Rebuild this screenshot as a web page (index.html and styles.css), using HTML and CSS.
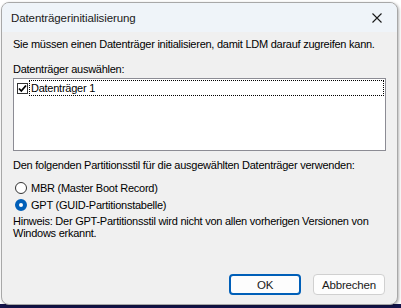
FILE: index.html
```html
<!DOCTYPE html>
<html lang="de">
  <head>
    <meta charset="UTF-8" />
    <meta name="viewport" content="width=device-width, initial-scale=1.0" />
    <title>Datenträgerinitialisierung</title>
    <link rel="stylesheet" href="styles.css">
  </head>

  <body>
    <div class="dialog">
      <div class="titlebar">
        <span class="title">Datenträgerinitialisierung</span>
        <svg class="close" width="10" height="10" viewBox="0 0 10 10">
          <path d="M0.5 0.5 L9.5 9.5 M9.5 0.5 L0.5 9.5" stroke="#1a1a1a" stroke-width="1.1" fill="none" />
        </svg>
      </div>

      <div class="content">
        <p class="intro">Sie müssen einen Datenträger initialisieren, damit LDM darauf zugreifen kann.</p>

        <p class="label">Datenträger auswählen:</p>
        <div class="listbox">
          <div class="item">
            <span class="check">
              <svg width="9" height="9" viewBox="0 0 9 9">
                <path d="M1 4.5 L3.3 7 L8 1.5" stroke="#000" stroke-width="1.8" fill="none" />
              </svg>
            </span>
            <span class="item-text">Datenträger 1</span>
          </div>
        </div>

        <p class="label style-label">Den folgenden Partitionsstil für die ausgewählten Datenträger verwenden:</p>
        <div class="radio-row first">
          <span class="radio"></span>
          <span>MBR (Master Boot Record)</span>
        </div>
        <div class="radio-row">
          <span class="radio checked"></span>
          <span>GPT (GUID-Partitionstabelle)</span>
        </div>
        <p class="hint">Hinweis: Der GPT-Partitionsstil wird nicht von allen vorherigen Versionen von<br>Windows erkannt.</p>

        <div class="buttons">
          <button class="btn default">OK</button>
          <button class="btn">Abbrechen</button>
        </div>
      </div>
    </div>
  </body>
</html>
```

FILE: styles.css
```css
body {
  margin: 0;
  height: 308px;
  overflow: hidden;
  background: linear-gradient(#ffffff 0, #ffffff 304px, #14144a 304px);
  font-family: "Liberation Sans", Arial, sans-serif;
  font-size: 11px;
  letter-spacing: -0.25px;
  color: #000;
}

p {
  margin: 0;
  white-space: nowrap;
}

.dialog {
  margin: 2px 0 0 1px;
  width: 395px;
  height: 301px;
  border: 1px solid #a8a8a8;
  border-radius: 8px;
  background: #f0f0f0;
  overflow: hidden;
  display: flex;
  flex-direction: column;
  box-shadow: 1px 1px 3px rgba(0, 0, 0, 0.3);
}

.titlebar {
  height: 29px;
  background: #eff4f9;
  display: flex;
  align-items: center;
  justify-content: space-between;
  padding: 0 15px 0 9px;
}

.title {
  font-size: 11.5px;
  letter-spacing: -0.1px;
  color: #1a1a1a;
}

.content {
  flex: 1;
  padding: 5px 11px 0 11px;
  display: flex;
  flex-direction: column;
}

.intro {
  line-height: 14px;
}

.label {
  margin-top: 11px;
  line-height: 14px;
}

.listbox {
  margin-top: 2px;
  height: 70px;
  border: 1px solid #8c8c94;
  background: #fff;
  padding: 1px 1px 0 3px;
}

.item {
  display: flex;
  align-items: center;
  height: 16px;
}

.check {
  width: 11px;
  height: 11px;
  border: 1px solid #333;
  background: #fff;
  box-sizing: border-box;
  display: flex;
  align-items: center;
  justify-content: center;
  margin-right: 1px;
}

.check svg {
  display: block;
}

.item-text {
  flex: 1;
  height: 16px;
  line-height: 14px;
  border: 1px dotted #000;
  box-sizing: border-box;
  padding-left: 1px;
}

.style-label {
  margin-top: 7px;
}

.radio-row {
  display: flex;
  align-items: center;
  height: 17px;
  padding-left: 2px;
}

.radio-row.first {
  margin-top: 7px;
}

.radio {
  width: 12px;
  height: 12px;
  box-sizing: border-box;
  border: 1px solid #333;
  border-radius: 50%;
  background: #fff;
  margin-right: 4px;
}

.radio.checked {
  border: 4px solid #005fb8;
  background: #fff;
}

.hint {
  margin-top: 2px;
  line-height: 12px;
}

.buttons {
  margin-top: auto;
  margin-bottom: 9px;
  display: flex;
  justify-content: flex-end;
  gap: 12px;
  padding-right: 1px;
}

.btn {
  width: 72px;
  height: 21px;
  border: 1px solid #d0d0d0;
  border-radius: 4px;
  background: #fdfdfd;
  font-family: "Liberation Sans", Arial, sans-serif;
  font-size: 11.5px;
  letter-spacing: -0.2px;
  color: #1a1a1a;
  padding: 0;
}

.btn.default {
  border: 2px solid #005fb8;
}
```
